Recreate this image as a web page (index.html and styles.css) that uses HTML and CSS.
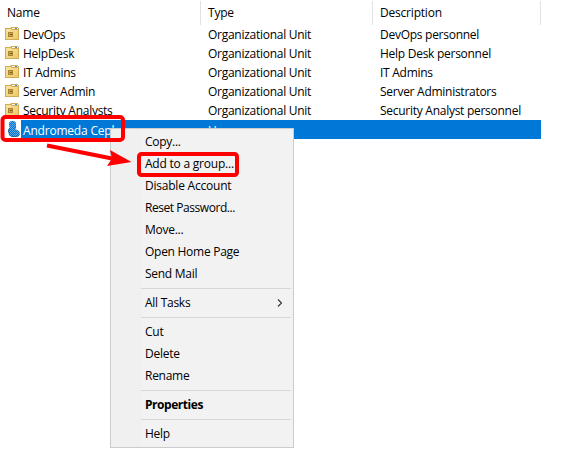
FILE: index.html
```
<!DOCTYPE html>
<html lang="en">
<head>
<meta charset="utf-8">
<title>Directory objects</title>
<link rel="stylesheet" href="styles.css">
</head>
<body>
<svg width="0" height="0" class="defs">
  <defs>
    <linearGradient id="gold" x1="0" y1="0" x2="1" y2="1"><stop offset="0" stop-color="#fbe5a0"/><stop offset="1" stop-color="#edc868"/></linearGradient>
    <pattern id="dither" width="2" height="2" patternUnits="userSpaceOnUse"><rect width="1" height="1" fill="#0078d7"/><rect x="1" y="1" width="1" height="1" fill="#0078d7"/></pattern>
    <symbol id="ou" viewBox="0 0 14 13">
      <path d="M0 1h5l1-1h7v1h1v12H0z" fill="#d2ab55"/>
      <path d="M7 1h6v1H7z" fill="#fff"/><path d="M10 1h2v1h-2z" fill="#2f8fe0"/>
      <path d="M1 2h5l1 1h6v9H1z" fill="url(#gold)"/>
      <path d="M3 5h5v5H3z" fill="#a98632"/><path d="M4 6h3v3H4z" fill="#c9a54a"/><path d="M5 7h2v1H5z" fill="#6b5420"/>
    </symbol>
  </defs>
</svg>
<main class="list">
  <div class="row head"><span>Name</span><span>Type</span><span>Description</span></div>
  <div class="row"><span class="name"><svg class="icon"><use href="#ou"/></svg><b>DevOps</b></span><span>Organizational Unit</span><span>DevOps personnel</span></div>
  <div class="row"><span class="name"><svg class="icon"><use href="#ou"/></svg><b>HelpDesk</b></span><span>Organizational Unit</span><span>Help Desk personnel</span></div>
  <div class="row"><span class="name"><svg class="icon"><use href="#ou"/></svg><b>IT Admins</b></span><span>Organizational Unit</span><span>IT Admins</span></div>
  <div class="row"><span class="name"><svg class="icon"><use href="#ou"/></svg><b>Server Admin</b></span><span>Organizational Unit</span><span>Server Administrators</span></div>
  <div class="row"><span class="name"><svg class="icon"><use href="#ou"/></svg><b>Security Analysts</b></span><span>Organizational Unit</span><span>Security Analyst personnel</span></div>
  <div class="row selected"><span class="name"><svg class="user" viewBox="0 0 16 18">
    <path d="M4 3 6 1h3l2 2v4l-1 2 4 2 1 3-1 2-3 1H7l-3-2v-2l-1-2 1-3 1-1-1-1z" fill="#67a5dc"/>
    <path d="M4 3 6 1h3l2 2v4l-1 2 4 2 1 3-1 2-3 1H7l-3-2v-2l-1-2 1-3 1-1-1-1z" fill="url(#dither)"/>
    <path d="M4.500 8.500 3.500 11l1 4L7 16.500h4l3-1M11 7l-1.500 2" fill="none" stroke="#245f93" stroke-width=".8"/>
  </svg><b>Andromeda Cepheus</b></span><span>User</span><span></span></div>
</main>
<nav class="menu">
  <div class="item">Copy...</div>
  <div class="item wide">Add to a group...</div>
  <div class="item wide">Disable Account</div>
  <div class="item tight">Reset Password...</div>
  <div class="item">Move...</div>
  <div class="item">Open Home Page</div>
  <div class="item">Send Mail</div>
  <hr>
  <div class="item">All Tasks<svg class="chevron" viewBox="0 0 6 8"><path d="M1 .5 4.5 4 1 7.5" fill="none" stroke="#333" stroke-width="1.1"/></svg></div>
  <hr>
  <div class="item">Cut</div>
  <div class="item">Delete</div>
  <div class="item">Rename</div>
  <hr>
  <div class="item strong">Properties</div>
  <hr>
  <div class="item">Help</div>
</nav>
<svg class="marks" viewBox="0 0 568 450" fill="none" stroke="#f00" stroke-width="4">
  <rect x="2.5" y="117" width="120.5" height="23" rx="3"/>
  <rect x="139" y="154" width="98" height="21" rx="2.5"/>
  <path d="M47 145.5 112 158.5"/>
  <path d="M110 150 131.500 162 107 166 112 158.500z" fill="#f00" stroke="none"/>
</svg>
</body>
</html>
```
FILE: styles.css
```
body {
  margin: 0;
  width: 568px;
  height: 450px;
  overflow: hidden;
  position: relative;
  background: #fff;
  color: #000;
  font: 12px/19px "Open Sans", "Noto Sans", sans-serif;
  letter-spacing: -0.27px;
}
.defs { position: absolute; }
.list { width: 541px; }
.row {
  display: grid;
  grid-template-columns: 201px 172px 168px;
  height: 19px;
  white-space: nowrap;
}
.row > span { padding-left: 7px; }
.row b { font-weight: 400; }
.row > .name { display: flex; padding-left: 5px; }
.head { height: 25px; line-height: 26px; letter-spacing: -0.2px; }
.head > span {
  height: 24px;
  margin-top: 1px;
  line-height: 24px;
  box-sizing: border-box;
  border-right: 1px solid #e2e2e2;
}
.icon { width: 14px; height: 13px; margin: 2px 4px 0 0; }
.selected {
  color: #fff;
  line-height: 21px;
  letter-spacing: -0.2px;
  background: linear-gradient(90deg, #fff 21px, #0078d7 21px);
}
.user { width: 16px; height: 18px; margin: 0 2px 0 0; }
.menu {
  position: absolute;
  left: 110px;
  top: 128px;
  width: 184px;
  height: 320px;
  box-sizing: border-box;
  padding: 2px;
  border: 1px solid #ccc;
  background: linear-gradient(90deg, #f0f0f0 30px, #f2f2f2 30px);
}
.item {
  display: flex;
  align-items: center;
  justify-content: space-between;
  height: 22px;
  padding: 0 8px 0 32px;
  line-height: 22px;
  white-space: nowrap;
}
.wide { letter-spacing: -0.22px; }
.tight { letter-spacing: -0.45px; }
.strong { font-weight: 700; letter-spacing: -0.45px; }
.chevron { width: 6px; height: 8px; }
.menu hr {
  height: 1px;
  margin: 3px 0 3px 28px;
  border: 0;
  background: #d7d7d7;
}
.marks { position: absolute; left: 0; top: 0; width: 568px; height: 450px; }
```
